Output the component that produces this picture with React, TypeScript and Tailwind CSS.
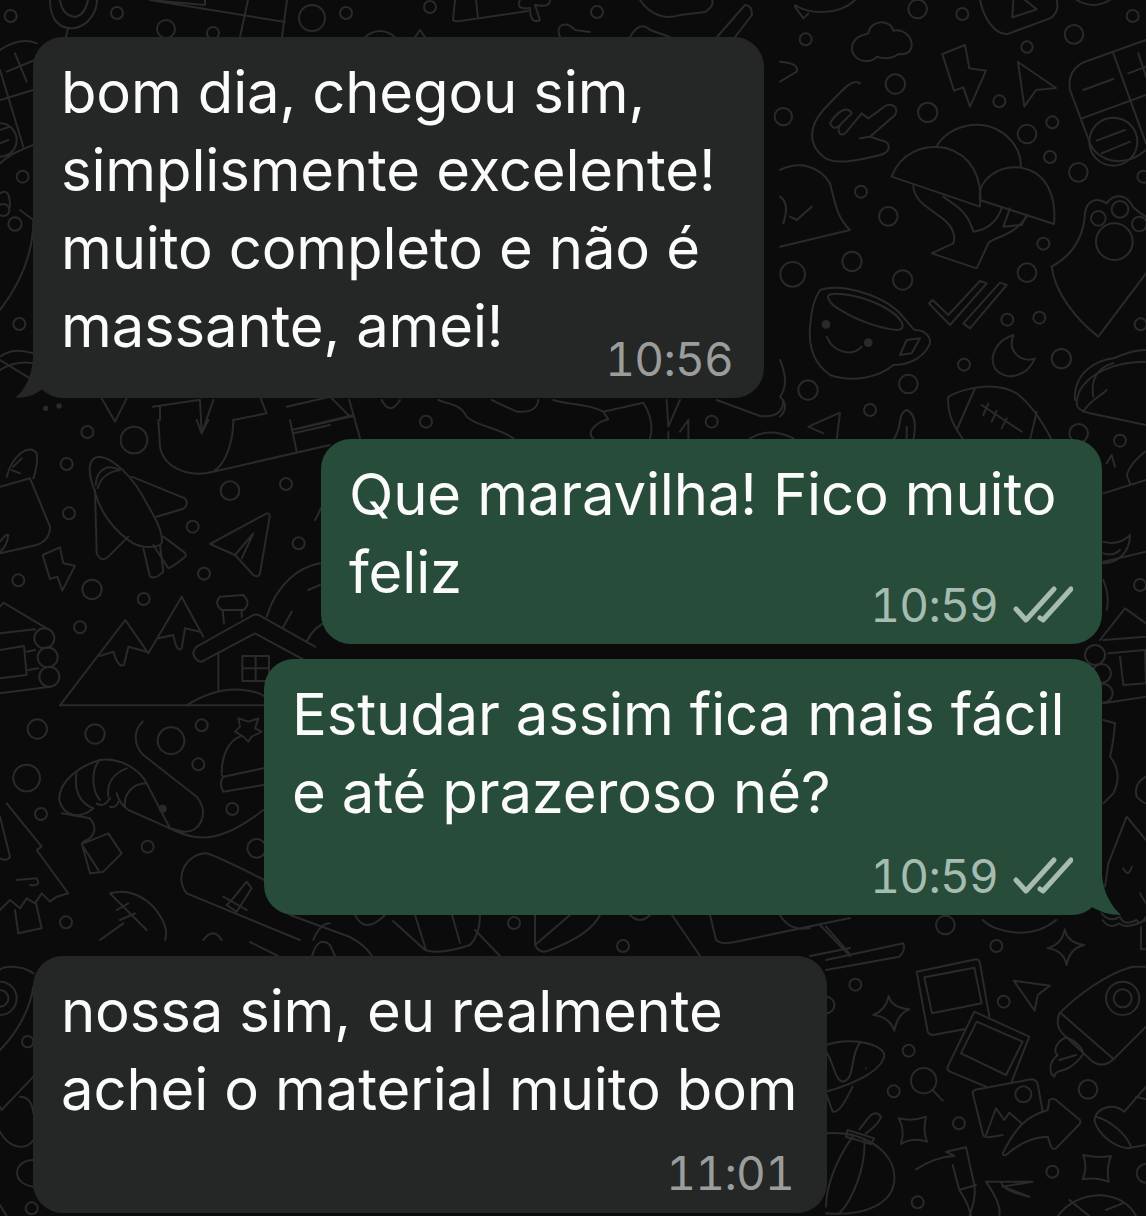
type Doodle = {
  x: number;
  y: number;
  scale: number;
  circles: number[][];
  dots?: number[][];
  paths: string[];
};

// wallpaper traced in crops, each group keeps the coordinates of its crop
const doodles: Doodle[] = [
  {
    x: 780,
    y: 0,
    scale: 1 / 3,
    circles: [
      [413, 27, 28], [547, 42, 18], [1058, 48, 18], [77, 118, 18], [882, 103, 28], [741, 141, 17],
      [346, 252, 29], [443, 337, 29], [658, 304, 18], [817, 367, 18], [741, 402, 28], [810, 471, 18],
      [895, 517, 28], [1090, 530, 18], [243, 575, 18], [325, 649, 28], [790, 731, 18], [741, 818, 28],
      [216, 784, 29], [38, 823, 37], [368, 840, 29], [682, 959, 18], [778, 953, 18], [1082, 973, 18],
      [844, 1076, 29], [552, 1094, 18], [385, 1152, 28], [84, 1170, 29], [270, 1230, 18], [896, 1300, 28],
      [10, 350, 26], [955, 655, 22], [1020, 628, 25], [1078, 672, 22], [1003, 725, 55], [1000, 425, 72],
    ],
    dots: [[138, 973, 13], [265, 1028, 13]],
    paths: [
      "M262 183C225 185 205 150 222 125C230 105 255 105 265 100C270 60 330 55 340 92C370 85 395 110 395 135C395 160 370 165 355 162C335 180 300 175 290 170C282 180 272 183 262 183Z",
      "M487 162L555 135L568 205L618 212L570 320L550 262L522 272Z",
      "M714 186L828 264L768 270L733 320Z",
      "M600 0C610 50 640 100 680 103L810 55C835 40 835 20 830 0",
      "M700 0L697 52L770 28L735 0",
      "M45 15C90 45 180 45 225 0M45 20L70 55L85 40",
      "M890 0Q940 30 990 0",
      "M0 185Q60 190 50 215L0 245",
      "M240 250C220 235 200 255 130 330C90 375 80 430 130 470C160 495 220 485 300 465C335 455 335 425 300 420L270 410L345 345C360 320 330 305 310 322L265 355L245 340L200 395C180 420 165 385 185 370L215 340C200 310 165 345 150 370C160 390 170 385 185 370",
      "M240 415L270 410",
      "M1098 120L930 180Q860 200 870 270L930 430C950 480 1030 510 1098 450",
      "M1000 160L1098 430M905 355L1098 285M910 270L1000 237M1045 220L1098 200M1075 160L1098 230M950 422L1035 390M965 460L1050 425",
      "M470 440C500 380 600 350 670 400C710 430 725 470 722 500",
      "M335 530C360 460 430 430 500 445C570 465 610 530 600 620Z",
      "M600 600C590 540 660 490 730 505C800 520 830 590 822 672Z",
      "M400 555C400 600 440 620 480 650C510 670 530 700 520 730L455 760L590 805L625 730C640 710 700 710 740 650",
      "M490 590C530 620 560 630 580 695C630 690 660 650 665 620M670 680L690 625M670 680L725 675L740 645",
      "M815 800C870 770 910 720 915 640C920 600 950 590 980 610C1000 580 1040 580 1058 620C1080 640 1098 650 1098 650",
      "M815 800C825 880 890 960 955 1010L1098 820",
      "M0 510C60 480 120 500 150 550C165 610 170 650 210 690L0 740M0 590Q30 610 10 670M30 650L50 660L95 620",
      "M120 870C180 850 290 880 350 930C380 960 395 985 405 990C440 990 460 1020 445 1040C430 1070 390 1095 340 1095C300 1130 220 1150 150 1125C100 1090 85 1040 90 980C95 930 100 900 120 870Z",
      "M145 895C130 870 230 880 300 915C370 950 385 990 350 990C300 985 230 960 190 935C170 925 150 910 145 895Z",
      "M380 1020L420 1015L395 1060L360 1065Z",
      "M140 1010C160 1060 220 1070 245 1040",
      "M447 910L458 900L505 945L600 843L620 850L510 975Z",
      "M550 970L660 848L680 855L570 985Z",
      "M700 1005C650 1020 625 1070 645 1105C670 1140 735 1140 765 1075C730 1090 680 1060 700 1005Z",
      "M505 1190C560 1160 650 1145 710 1180C760 1220 790 1270 815 1320M505 1190C500 1250 530 1290 550 1320M585 1165L530 1290M605 1215L725 1295M625 1210L610 1245M650 1232L635 1265M680 1255L665 1285M770 1235L750 1320",
      "M1098 1085C1000 1085 930 1120 900 1170C880 1220 890 1230 930 1240L1098 1275",
      "M885 1200C880 1110 960 1080 1000 1075C1040 1060 1060 1050 1098 1050M940 1190C930 1130 960 1100 1000 1090M910 1235C930 1200 960 1190 980 1170",
      "M180 1238L85 1280L130 1300M180 1238L170 1320",
      "M340 1320C370 1280 350 1240 380 1230C405 1240 410 1270 400 1320M380 1280L380 1320",
      "M0 1080Q30 1150 0 1190Q30 1220 0 1250",
    ],
  },
  {
    x: 0,
    y: 420,
    scale: 1 / 3,
    circles: [
      [262, 36, 18], [402, 60, 40], [200, 132, 18], [690, 212, 28], [858, 192, 18], [207, 280, 18],
      [578, 320, 18], [896, 370, 18], [55, 481, 18], [276, 508, 29], [612, 461, 18], [431, 537, 18],
      [240, 622, 18], [112, 927, 29], [285, 942, 29], [513, 962, 40], [605, 916, 18], [595, 1033, 18],
      [80, 1074, 40], [123, 1182, 18], [443, 1280, 18], [697, 1167, 18], [198, 1507, 18], [133, 655, 30],
      [143, 712, 30], [148, 770, 30], [770, 1285, 28],
    ],
    dots: [[488, 1166, 12]],
    paths: [
      "M283 210C260 150 265 110 300 110C340 115 400 170 440 250C470 300 490 340 485 370C470 385 430 385 400 370C350 340 300 280 283 210Z",
      "M285 210L290 400Q305 430 325 410L385 350",
      "M395 170L555 235Q570 255 545 268L470 290",
      "M430 385L450 470Q465 480 490 455L480 375M460 375L505 445Q520 440 550 415Q565 405 550 395L490 350",
      "M287 195C290 150 320 130 360 150C325 155 300 175 293 205",
      "M630 372L800 280Q812 280 808 295L780 460Q775 475 760 465L705 405ZM705 405L760 340L725 415",
      "M128 405L180 382L190 430L225 437L187 512L172 470L150 477Z",
      "M180 856L376 600L445 700L545 530L610 650M180 856L800 856",
      "M300 708L340 695Q355 745 372 735L385 680L440 695M475 655L520 645Q530 700 545 685L555 625L600 635",
      "M590 680L760 585Q770 580 785 590L945 680M605 725L765 640L940 735M590 680Q570 700 590 718Q598 730 612 722",
      "M672 610L668 570M725 590L725 570M665 570Q640 550 660 530L730 525Q755 550 730 570Z",
      "M655 700L655 810M727 708L807 708L807 783L727 783ZM767 708L767 783M727 745L807 745",
      "M560 856Q650 800 730 810Q780 815 800 835",
      "M0 560L10 548L140 625M0 640L105 628M0 820L150 800M0 690L72 678L80 765L0 775M105 690L80 695M115 745L85 750",
      "M0 200L90 175L150 320Q150 360 110 375L0 400M20 170C40 100 90 70 110 100C115 130 105 160 100 175M40 140L65 115M35 150L60 160M0 365Q20 340 25 345Q20 380 0 395",
      "M280 1165C240 1200 190 1190 178 1140C175 1090 230 1040 300 1020C360 1010 420 1050 440 1090L510 1225L385 1170C370 1160 355 1140 350 1120",
      "M230 1060C220 1110 240 1150 280 1165M295 1025C270 1060 280 1120 300 1140M380 1045C340 1060 320 1090 325 1130M440 1090C400 1090 370 1120 375 1160M185 1180L270 1195C290 1220 290 1250 250 1265M245 1270L270 1360L310 1355L365 1300L325 1240L250 1270M250 1280L295 1350M290 1150Q310 1165 330 1135M330 1160Q350 1165 355 1145",
      "M428 905C400 930 400 975 430 1005L590 1130C630 1180 600 1240 550 1235L510 1225M510 1225C580 1260 650 1280 790 1170",
      "M665 1060C665 1000 690 960 720 950M670 1070L790 1045M670 1115L790 1095M670 1070Q655 1090 670 1115M665 1065L672 1072",
      "M715 895L745 905L775 895L765 925L785 935L755 950L745 965L730 950L705 935L720 920Z",
      "M20 1150L125 1280L110 1290L205 1420L170 1430L150 1445L125 1420L105 1450L80 1435L60 1465L30 1440L0 1470M0 1190L30 1310Q25 1325 0 1315",
      "M45 1470L55 1540L125 1525L108 1450M50 1380L110 1375Q125 1400 90 1395",
      "M620 1300C560 1300 520 1370 560 1420L900 1560M620 1300Q660 1310 990 1480M695 1440L740 1385L755 1405L710 1475L680 1455ZM670 1430L740 1470",
      "M330 1420Q400 1400 460 1460Q510 1520 495 1560M330 1420L440 1530M300 1560L370 1510M350 1470L385 1450M360 1500L405 1480",
      "M610 1560Q640 1520 665 1560M940 1560Q960 1510 990 1510",
      "M475 0L480 80C490 140 560 175 640 155L990 75M700 0C700 60 680 130 640 155M590 0L605 40L625 0M870 0L890 95M880 40L990 15",
      "M945 300C960 280 955 260 990 240M800 590C830 490 900 440 960 430M850 620L875 575M925 510L960 495M920 665Q940 620 990 600",
    ],
  },
  {
    x: 826,
    y: 920,
    scale: 1 / 3,
    circles: [
      [358, 15, 28], [511, 78, 18], [88, 194, 18], [533, 245, 18], [248, 392, 18], [203, 514, 18],
      [399, 610, 18], [786, 508, 28], [679, 755, 18], [275, 847, 18], [0, 255, 25], [960, 760, 28],
      [890, 235, 50], [890, 235, 27], [293, 482, 38], [592, 523, 24],
    ],
    dots: [[120, 445, 3]],
    paths: [
      "M716 28Q725 70 775 75Q730 85 722 135Q712 90 665 85Q710 70 716 28Z",
      "M188 228Q195 262 250 268Q215 280 205 332Q190 290 142 285Q180 270 188 228Z",
      "M218 595Q260 605 300 590Q290 630 303 665Q260 650 225 672Q238 630 218 595Z",
      "M772 705Q815 715 855 708Q840 745 848 785Q805 770 770 778Q785 745 772 705Z",
      "M272 155L450 118Q460 118 462 130L490 290M272 155L305 335Q310 345 320 345L415 328",
      "M295 172L445 143L467 250L318 280Z",
      "M445 275L610 350L555 490M445 275L365 440Q362 450 372 455L480 500",
      "M452 305L590 365L540 465L405 400Z",
      "M440 520Q440 510 455 508L615 478Q630 478 635 492L650 575M440 520L470 640Q472 652 490 652L530 645",
      "M480 645L510 565L535 600L550 578L585 608",
      "M530 700C570 620 600 590 665 570L670 540Q680 532 690 540L762 600Q765 610 758 615L690 685Q680 690 675 680L665 650C620 650 580 670 540 705Q530 708 530 700Z",
      "M563 182L672 197L635 225L626 272Z",
      "M960 140L920 140C840 160 750 230 700 280C690 310 695 330 720 350L800 425Q830 445 860 420C900 380 940 340 960 320M705 280L860 415",
      "M720 352C690 365 680 395 695 405C665 430 670 460 685 470C690 440 720 470 770 405C775 385 745 360 720 352M700 420L750 405",
      "M320 510L350 542",
      "M960 500L895 575C860 545 810 565 805 600C815 640 860 680 905 685L960 675M810 590C850 600 900 640 915 680M930 530L960 538",
      "M0 375C70 350 170 370 175 405C170 450 90 490 0 515M105 365C70 400 90 480 50 485C25 480 25 430 0 395M80 500C60 540 40 580 20 575L0 520",
      "M0 640C120 630 210 700 205 780C200 850 120 890 0 880M115 660C120 740 80 840 40 880M80 650C30 720 0 800 0 860M100 628L130 590Q150 570 165 590Q160 610 120 640M65 630L145 655L135 672L60 650Z",
      "M270 748Q330 710 385 708L360 695L420 682L445 795C450 830 440 860 430 888M380 735L400 810L450 795M400 810C420 840 430 860 435 888",
      "M480 785L620 785L530 800L610 830C570 820 530 810 525 785M480 785C510 830 525 860 520 888",
      "M695 888Q740 830 820 825Q900 830 930 888M730 840L790 888M840 870L890 850",
      "M0 20L70 100M0 120L232 70Q240 90 220 110L0 150",
      "M470 0C510 40 620 60 690 0M830 0Q850 30 880 10Q900 30 960 0M945 20L945 88L960 88",
    ],
  },
  {
    x: 0,
    y: 0,
    scale: 1 / 3,
    circles: [[32, 48, 18], [68, 530, 18], [58, 972, 18], [45, 672, 20], [10, 630, 18], [0, 420, 50]],
    dots: [[137, 1225, 8], [177, 1218, 8]],
    paths: [
      "M0 150Q60 110 110 130M20 215L105 180M45 160L80 245M0 300L100 270M0 210L70 440M0 390L30 380M0 430L25 420M100 435Q30 460 0 490",
      "M0 580Q30 560 30 620M60 630L100 660Q100 800 0 930M0 1070Q40 1040 100 1060M0 1110Q50 1080 100 1090",
      "M0 1080L180 1190Q210 1195 212 1170L205 1120",
    ],
  },
  {
    x: 0,
    y: 0,
    scale: 1,
    circles: [[117, 13, 6], [166, 29, 9], [213, 33, 6], [312, 18, 13], [346, 13, 6], [430, 7, 6], [597, 12, 6]],
    paths: [
      "M50 0C50 20 60 30 75 28C90 25 97 10 97 0M60 0Q62 15 75 17Q85 15 88 0M68 28L66 37",
      "M150 0L285 22M248 0L240 37M287 0L282 37M205 0L205 5L150 0",
      "M455 0L453 20Q455 22 460 21L528 11M476 0L478 18",
      "M520 0Q515 10 530 8Q530 25 540 20L535 5Q550 8 550 0",
      "M640 0C650 15 665 20 680 15L705 12Q715 5 712 0",
      "M717 37L745 5Q752 5 752 15L735 37M745 40L760 55",
      "M560 37C555 25 565 20 575 30L590 32M630 37Q640 20 650 30L670 37M365 37Q380 25 395 37M415 37L420 30L425 37",
    ],
  },
  {
    x: 0,
    y: 300,
    scale: 1 / 3,
    circles: [],
    paths: ["M305 295L345 365L380 295M458 320L595 300M480 320L480 360M600 300L605 400L640 300M700 360L800 340L780 290M860 320L990 290L1050 350M875 390L1060 345"],
  },
  {
    x: 300,
    y: 390,
    scale: 1 / 3,
    circles: [[378, 95, 18], [1235, 95, 18]],
    paths: [
      "M148 30L180 145M0 115L160 78M245 30Q270 80 300 30M415 30C450 45 480 40 500 80C530 110 590 110 640 145",
      "M575 30L650 65Q710 70 715 30M760 30C800 45 870 40 910 65L1030 38M910 65L925 88C880 100 860 130 880 145",
      "M1030 38C1050 70 1060 110 1050 145M1100 30L1105 110L1140 30M1105 125L1105 145M1140 125L1165 90L1165 145M1250 30L1380 78Q1450 85 1450 30M1350 145Q1410 110 1480 145",
    ],
  },
  {
    x: 0,
    y: 0,
    scale: 1,
    circles: [[514, 923, 6], [623, 946, 6]],
    paths: [
      "M250 942L278 956M290 915L350 937Q365 945 372 956M312 956Q318 935 330 945L335 956M355 915Q365 935 385 915",
      "M393 921L425 950Q440 955 470 945Q480 935 480 915M415 915L426 950M452 915L460 943M475 930L500 956",
      "M535 915L535 945Q540 955 550 950Q590 935 600 915M535 945L570 915M630 915Q640 925 650 915M672 915L700 956",
      "M710 915L716 940Q722 945 735 942L850 918M820 925L850 956M780 915Q790 932 810 928M810 956L850 948",
    ],
  },
  {
    x: 1080,
    y: 420,
    scale: 1 / 3,
    circles: [[120, 62, 18], [180, 495, 18], [45, 705, 30], [65, 760, 28], [70, 820, 28]],
    paths: [
      "M70 220L198 180M140 165Q150 130 195 95M140 165L150 190M80 130L95 105L105 140",
      "M70 365C100 375 130 365 150 345C150 400 110 430 70 430M70 400Q100 410 120 390M70 425L198 395",
      "M60 660L135 565L198 610M70 660L198 650M85 700L195 690L198 790L130 795L120 710M70 850L198 830M70 480Q90 530 80 570",
      "M70 900L105 910Q100 970 90 1010Q130 1060 100 1120L70 1150M198 1070Q160 1090 170 1130Q190 1150 198 1150",
      "M75 1400L85 1330L140 1190L198 1260M130 1345Q145 1375 155 1340M65 1480Q90 1510 120 1490Q130 1520 170 1500Q180 1520 198 1490M180 1420L198 1450",
    ],
  },
  {
    x: 0,
    y: 900,
    scale: 1 / 3,
    circles: [[0, 295, 50], [0, 295, 25], [83, 425, 17], [95, 925, 18]],
    paths: [
      "M100 220C60 190 0 200 0 210M100 260C90 330 50 400 0 450M100 530L5 630L0 620M60 590Q95 590 100 640M0 695C30 750 80 750 100 720M100 780C40 780 30 850 100 860M0 915L20 948",
    ],
  },
];

function Wallpaper() {
  return (
    <svg className="absolute inset-0" width="1146" height="1216" viewBox="0 0 1146 1216" fill="none" aria-hidden>
      {doodles.map((d, i) => (
        <g key={i} transform={`translate(${d.x} ${d.y}) scale(${d.scale})`} stroke="#2a2a2a" strokeWidth={2 / d.scale} strokeLinecap="round" strokeLinejoin="round">
          {d.paths.map((p, j) => (
            <path key={j} d={p} />
          ))}
          {d.circles.map(([cx, cy, r], j) => (
            <circle key={j} cx={cx} cy={cy} r={r} />
          ))}
          {d.dots?.map(([cx, cy, r], j) => (
            <circle key={j} cx={cx} cy={cy} r={r} fill="#2a2a2a" stroke="none" />
          ))}
        </g>
      ))}
    </svg>
  );
}

function Ticks() {
  return (
    <svg width="60" height="40" viewBox="0 0 60 40" fill="none" stroke="#a6bcb1" strokeWidth="5" strokeLinecap="round" strokeLinejoin="round">
      <path d="M3 24L13 35L41 4" />
      <path d="M27 33L30 35L58 4" />
    </svg>
  );
}

function Time({ value, sent }: { value: string; sent?: boolean }) {
  return (
    <span className={sent ? "flex items-center gap-[15px] text-[46px] leading-[52px] tracking-[-0.8px] tabular-nums text-[#a6bcb1]" : "flex items-center text-[46px] leading-[52px] tracking-[-0.8px] tabular-nums text-[#9b9d9c]"}>
      {value}
      {sent && <Ticks />}
    </span>
  );
}

export default function App() {
  return (
    <div className="relative h-[1216px] w-[1146px] overflow-hidden whitespace-nowrap bg-[#0b0b0b] font-['Inter',sans-serif] text-[58px] leading-[78px] tracking-[-0.15px] text-[#fbfbfb]">
      <Wallpaper />
      <div className="relative flex flex-col pl-[33px] pr-[44px] pt-[37px]">
        {/* recebida, com rabinho */}
        <div className="relative h-[361px] w-[731px] rounded-[30px] bg-[#252726] pl-[28px] pr-[31px] pt-[16px]">
          <svg className="absolute left-[-18px] top-[321px]" width="40" height="40" viewBox="0 0 40 40">
            <path d="M18 0C17 18 10 32 0 40C10 40 20 37 26 32L40 20L40 0Z" fill="#252726" />
          </svg>
          <p className="relative">bom dia, chegou sim,</p>
          <p className="relative">simplismente excelente!</p>
          <p className="relative">muito completo e não é</p>
          <div className="relative flex items-start justify-between">
            <span>massante, amei!</span>
            <span className="mt-[46px]">
              <Time value="10:56" />
            </span>
          </div>
        </div>

        <div className="mt-[41px] h-[205px] w-[781px] self-end rounded-[30px] bg-[#274d3a] pl-[28px] pr-[29px] pt-[16px]">
          <p>Que maravilha! Fico muito</p>
          <div className="flex items-start justify-between">
            <span>feliz</span>
            <span className="mt-[46px]">
              <Time value="10:59" sent />
            </span>
          </div>
        </div>

        <div className="relative mt-[15px] h-[256px] w-[838px] self-end rounded-[30px] bg-[#274d3a] pl-[28px] pr-[29px] pt-[16px]">
          <svg className="absolute left-[818px] top-[216px]" width="40" height="40" viewBox="0 0 40 40">
            <path d="M20 0C21 18 30 32 39 40C28 40 18 37 10 32L0 20L0 0Z" fill="#274d3a" />
          </svg>
          <p className="relative">Estudar assim fica mais fácil</p>
          <p className="relative">e até prazeroso né?</p>
          <div className="relative mt-[19px] flex justify-end">
            <Time value="10:59" sent />
          </div>
        </div>

        <div className="mt-[41px] h-[257px] w-[794px] rounded-[30px] bg-[#252726] pl-[28px] pr-[33px] pt-[16px]">
          <p>nossa sim, eu realmente</p>
          <p>achei o material muito bom</p>
          <div className="mt-[19px] flex justify-end">
            <Time value="11:01" />
          </div>
        </div>
      </div>
    </div>
  );
}
